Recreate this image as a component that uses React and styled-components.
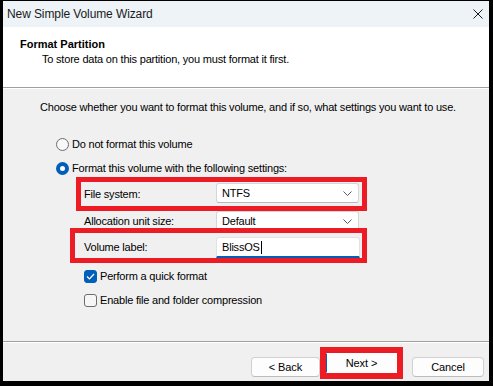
import React from "react";
import styled, { createGlobalStyle } from "styled-components";

const Global = createGlobalStyle`
  html, body { margin: 0; padding: 0; background: #000; }
  body { font-family: "Liberation Sans", Arial, sans-serif; }
  * { box-sizing: border-box; }
`;

const Window = styled.div`
  width: 493px;
  height: 386px;
  border-style: solid;
  border-color: #000;
  border-width: 1px 4px 5px 3px;
  background: #f0f0f0;
  display: flex;
  flex-direction: column;
  font-family: "Liberation Sans", Arial, sans-serif;
  font-size: 11px;
  letter-spacing: -0.2px;
  color: #000;
  overflow: hidden;
`;

const TitleBar = styled.div`
  height: 26px;
  flex: none;
  background: #eef3f8;
  display: flex;
  align-items: center;
  justify-content: space-between;
  padding: 0 6px 0 4px;
  font-size: 12px;
  letter-spacing: -0.1px;
  color: #1a1a1a;
`;

const Close = styled.svg`
  width: 10px;
  height: 10px;
`;

const Header = styled.div`
  height: 61px;
  flex: none;
  background: #fff;
  padding: 11px 0 0 17px;
  border-bottom: 1px solid #a0a0a0;
  box-shadow: 0 1px 0 #fff;
`;

const HeaderTitle = styled.div`
  font-weight: bold;
  letter-spacing: 0;
  line-height: 13px;
`;

const HeaderSub = styled.div`
  margin: 2px 0 0 22px;
  line-height: 13px;
`;

const Content = styled.div`
  flex: 1;
  padding-top: 13px;
  display: flex;
  flex-direction: column;
`;

const Intro = styled.div`
  margin-left: 37px;
  line-height: 13px;
`;

const Option = styled.label`
  display: flex;
  align-items: center;
  gap: 3px;
  height: 24px;
  margin-left: ${(p) => p.$indent}px;
  margin-top: ${(p) => p.$top || 0}px;
`;

const Radio = styled.span`
  width: 13px;
  height: 13px;
  border-radius: 50%;
  flex: none;
  background: ${(p) => (p.$on ? "#fff" : "#f8f8f8")};
  border: ${(p) => (p.$on ? "4px solid #005fb8" : "1px solid #6d6d6d")};
`;

const Check = styled.span`
  width: 13px;
  height: 13px;
  border-radius: 3px;
  flex: none;
  display: flex;
  align-items: center;
  justify-content: center;
  background: ${(p) => (p.$on ? "#005fb8" : "#f6f6f6")};
  border: 1px solid ${(p) => (p.$on ? "#005fb8" : "#6d6d6d")};
`;

const Settings = styled.div`
  margin: -3px 0 0 67px;
  width: 297px;
  display: flex;
  flex-direction: column;
`;

const Row = styled.div`
  display: grid;
  grid-template-columns: 132px ${(p) => p.$w || 143}px;
  align-items: center;
  position: relative;
  padding-left: ${(p) => p.$pad}px;
  margin-left: ${(p) => p.$offset || 0}px;
  height: ${(p) => p.$h}px;
  margin-bottom: ${(p) => p.$mb || 0}px;
`;

const Highlight = styled(Row)`
  border: 5px solid #ed1c24;
  z-index: 1;
  padding-top: ${(p) => p.$pt}px;
  align-items: start;
`;

const Label = styled.span`
  line-height: 13px;
  align-self: center;
`;

const Select = styled.div`
  height: 20px;
  background: #fff;
  border: 1px solid #d6d6d6;
  border-bottom-color: #b8b8b8;
  border-radius: 3px;
  display: flex;
  align-items: center;
  justify-content: space-between;
  padding: 0 6px 0 5px;
`;

const Input = styled.div`
  height: 21px;
  background: #fff;
  border: 1px solid #e2e2e2;
  border-bottom: 2px solid #005fb8;
  border-radius: 3px 3px 0 0;
  display: flex;
  align-items: center;
  padding-left: 5px;
`;

const Caret = styled.span`
  width: 1px;
  height: 13px;
  background: #000;
  margin-left: 1px;
`;

const Chevron = () => (
  <svg width="9" height="5" viewBox="0 0 9 5">
    <path d="M0.5 0.5 L4.5 4.5 L8.5 0.5" fill="none" stroke="#5a5a5a" strokeWidth="1" />
  </svg>
);

const Footer = styled.div`
  height: 40px;
  flex: none;
  border-top: 1px solid #a0a0a0;
  box-shadow: inset 0 1px 0 #fff;
  display: flex;
  align-items: flex-start;
  justify-content: flex-end;
  padding: 10px 5px 0 0;
`;

const Button = styled.button`
  font-family: "Liberation Sans", Arial, sans-serif;
  font-size: 11px;
  letter-spacing: -0.1px;
  color: #000;
  height: 20px;
  width: ${(p) => p.$w}px;
  background: #fdfdfd;
  border: 1px solid #d0d0d0;
  border-bottom-color: #bcbcbc;
  border-radius: 4px;
  padding: 0;
  margin-left: ${(p) => p.$ml || 0}px;
  margin-top: ${(p) => p.$mt || 0}px;
`;

const NextFrame = styled.div`
  border: 6px solid #ed1c24;
  margin-top: -5px;
  display: flex;
`;

const NextButton = styled(Button)`
  border-radius: 0;
  border-color: #fff;
  border-left-color: #005fb8;
`;

export default function App() {
  return (
    <>
      <Global />
      <Window>
        <TitleBar>
          <span>New Simple Volume Wizard</span>
          <Close viewBox="0 0 10 10">
            <path d="M0.5 0.5 L9.5 9.5 M9.5 0.5 L0.5 9.5" stroke="#1a1a1a" strokeWidth="1" />
          </Close>
        </TitleBar>
        <Header>
          <HeaderTitle>Format Partition</HeaderTitle>
          <HeaderSub>To store data on this partition, you must format it first.</HeaderSub>
        </Header>
        <Content>
          <Intro>
            Choose whether you want to format this volume, and if so, what settings you want to use.
          </Intro>
          <Option $indent={53} $top={18}>
            <Radio />
            Do not format this volume
          </Option>
          <Option $indent={53}>
            <Radio $on />
            Format this volume with the following settings:
          </Option>
          <Settings>
            <Highlight $pad={3} $offset={6} $h={34} $pt={1}>
              <Label>File system:</Label>
              <Select>
                NTFS
                <Chevron />
              </Select>
            </Highlight>
            <Row $pad={14} $h={20} $mb={-3}>
              <Label>Allocation unit size:</Label>
              <Select>
                Default
                <Chevron />
              </Select>
            </Row>
            <Highlight $pad={9} $h={35} $w={144} $pt={4}>
              <Label>Volume label:</Label>
              <Input>
                BlissOS
                <Caret />
              </Input>
            </Highlight>
          </Settings>
          <Option $indent={81} $top={1}>
            <Check $on>
              <svg width="9" height="7" viewBox="0 0 9 7">
                <path d="M1 3.5 L3.5 6 L8 1" fill="none" stroke="#fff" strokeWidth="1.2" />
              </svg>
            </Check>
            Perform a quick format
          </Option>
          <Option $indent={81}>
            <Check />
            Enable file and folder compression
          </Option>
        </Content>
        <Footer>
          <Button $w={69} $mt={5}>&lt; Back</Button>
          <NextFrame>
            <NextButton $w={71}>Next &gt;</NextButton>
          </NextFrame>
          <Button $w={72} $ml={9} $mt={5}>Cancel</Button>
        </Footer>
      </Window>
    </>
  );
}
